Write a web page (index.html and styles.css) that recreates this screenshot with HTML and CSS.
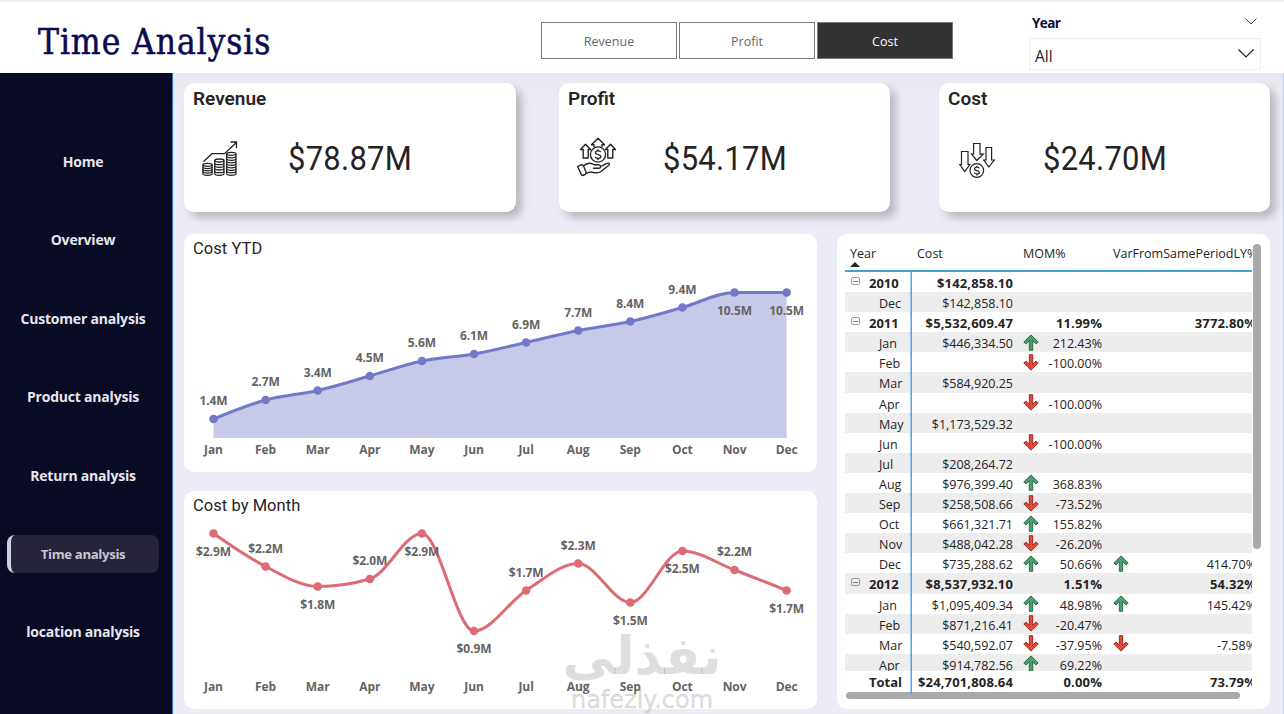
FILE: index.html
```html
<!DOCTYPE html>
<html lang="en">
<head>
    <meta charset="UTF-8">
    <meta name="viewport" content="width=device-width, initial-scale=1.0">
    <title>Time Analysis</title>
    <link rel="stylesheet" href="styles.css">
</head>
<body>
    <!-- Shared icons -->
    <svg class="sprite" width="0" height="0">
        <symbol id="arrow-up" viewBox="0 0 16 17">
            <path d="M8 .9 15.2 8 12.9 9.9 9.7 6.7V16.3H6.3V6.7L3.1 9.9.8 8z" fill="#4f9c6e" stroke="#2f6b4a" stroke-width="1"/>
        </symbol>
        <symbol id="arrow-down" viewBox="0 0 16 17">
            <path d="M8 16.1 15.2 9 12.9 7.1 9.7 10.3V.7H6.3V10.3L3.1 7.1.8 9z" fill="#e04a3c" stroke="#9c2c22" stroke-width="1"/>
        </symbol>
    </svg>

    <header class="header">
        <h1>Time Analysis</h1>
        <div class="tabs">
            <button class="tab">Revenue</button>
            <button class="tab">Profit</button>
            <button class="tab active">Cost</button>
        </div>
        <div class="slicer">
            <div class="slicer-title">
                <span>Year</span>
                <svg width="12" height="7" viewBox="0 0 12 7"><path d="M.5.5 6 6 11.5.5" fill="none" stroke="#444" stroke-width="1"/></svg>
            </div>
            <div class="slicer-box">
                <span>All</span>
                <svg width="16" height="9" viewBox="0 0 16 9"><path d="M.5.5 8 8 15.5.5" fill="none" stroke="#222" stroke-width="1.2"/></svg>
            </div>
        </div>
    </header>

    <div class="page">
        <nav class="sidebar">
            <a class="nav-item">Home</a>
            <a class="nav-item">Overview</a>
            <a class="nav-item">Customer analysis</a>
            <a class="nav-item">Product analysis</a>
            <a class="nav-item">Return analysis</a>
            <a class="nav-item active">Time analysis</a>
            <a class="nav-item">location analysis</a>
        </nav>

        <main class="main">
            <section class="kpis">
                <div class="kpi">
                    <h2>Revenue</h2>
                    <div class="kpi-body">
                        <svg class="kpi-icon" viewBox="0 -1 40 40" fill="none" stroke="#222" stroke-width="1.3">
                            <path d="M3.5 22.5 12 14.7H24.5L36.500 3.500M30.500 3H36.500V9"/>
                            <g id="stacks"></g>
                        </svg>
                        <span class="kpi-value">$78.87M</span>
                    </div>
                </div>
                <div class="kpi">
                    <h2>Profit</h2>
                    <div class="kpi-body">
                        <svg class="kpi-icon" viewBox="-2.500 .5 40 40" fill="none" stroke="#222" stroke-width="1.400" stroke-linejoin="round">
                            <path d="M16.500 9.500V7.300H14L20.500.8 27 7.300H24.500V9.500M5.700 20.500V12H3L8 6.800 13 12H10.700V20.500zM30.300 20.500V12H28L33 6.800 38 12H35.300V20.500z"/>
                            <circle cx="20.500" cy="17" r="7.600"/>
                            <path d="M23.300 14.600C22.800 13 18 12.700 18 15.200 18 17.700 23.300 16.500 23.300 19.100 23.300 21.700 18.200 21.300 17.700 19.400M20.500 11.700V13.300M20.500 20.900V22.500"/>
                            <path d="M6 28.500C10 24.500 14 25.500 17 27.300H21.500C24 28 23.500 30.500 21.500 30.700H15.500M24 28.700 29.500 25.800C32 25 32.500 27 31 28L23.500 34C21 36 19 35.500 16 35 13 34.300 11 34.500 9 36M.2 29.200 3.300 27.500C5 26.800 6 28 6.500 29.500L8.500 34.500C9 36 8.500 36.500 7.500 37L5 38C4.300 38 4 37.500 3.800 37z"/>
                        </svg>
                        <span class="kpi-value">$54.17M</span>
                    </div>
                </div>
                <div class="kpi">
                    <h2>Cost</h2>
                    <div class="kpi-body">
                        <svg class="kpi-icon" viewBox="-1.800 -.5 40 40" fill="none" stroke="#222" stroke-width="1.200">
                            <path d="M16.800 5H23.200V15.700H26.500L20 22 14.800 15.700H16.800zM4.700 13H11.200V26H13L8 33 3 26H4.700zM29.200 9H34.800V21.500H37.500L32 28.500 27 21.500H29.200z"/>
                            <circle cx="20" cy="32" r="6.800" fill="#fff"/>
                            <path d="M22.500 29.900C22 28.300 17.700 28.100 17.700 30.400 17.700 32.700 22.600 31.500 22.600 33.900 22.600 36 18 35.900 17.500 34.100M20 27.200V28.700M20 35.500V37"/>
                        </svg>
                        <span class="kpi-value">$24.70M</span>
                    </div>
                </div>
            </section>

            <section class="visuals">
                <div class="charts">
                    <div class="panel">
                        <h3>Cost YTD</h3>
                        <svg id="ytdChart" class="chart ytd" width="633" height="208" viewBox="0 30 633 208"></svg>
                    </div>
                    <div class="panel">
                        <h3>Cost by Month</h3>
                        <svg id="monthChart" class="chart month" width="633" height="188" viewBox="0 30 633 188"></svg>
                        <div class="watermark">
                            <span class="mark-ar" lang="ar">نفذلي</span>
                            <span class="mark-en">nafezly.com</span>
                        </div>
                    </div>
                </div>

                <div class="panel matrix">
                    <div class="matrix-view">
                        <div class="row head">
                            <div class="cell year">Year<i class="sort"></i></div>
                            <div class="cell">Cost</div>
                            <div class="cell">MOM%</div>
                            <div class="cell">VarFromSamePeriodLY%</div>
                        </div>
                        <div class="matrix-body" id="matrixBody"></div>
                        <div class="row total">
                            <div class="cell year">Total</div>
                            <div class="cell num">$24,701,808.64</div>
                            <div class="cell num">0.00%</div>
                            <div class="cell num">73.79%</div>
                        </div>
                        <div class="scroll-x"></div>
                    </div>
                    <div class="scroll-y"></div>
                </div>
            </section>
        </main>
    </div>

    <script src="script.js"></script>
</body>
</html>
```
FILE: styles.css
```css
* {
    box-sizing: border-box;
}
body {
    margin: 0;
    width: 1284px;
    height: 714px;
    overflow: hidden;
    font-family: 'Open Sans', 'Noto Sans', sans-serif;
    background-color: #fff;
    color: #252423;
}
h1, h2, h3 {
    margin: 0;
}
.sprite {
    display: block;
    position: absolute;
}

/* Header */
.header {
    display: flex;
    align-items: flex-start;
    height: 73px;
    border-top: 2px solid #f0f0f0;
}
.header h1 {
    width: 541px;
    padding: 18px 0 0 38px;
    font-family: 'DejaVu Serif Condensed', 'DejaVu Serif', serif;
    font-stretch: condensed;
    font-size: 35px;
    font-weight: normal;
    letter-spacing: 0.9px;
    line-height: 44px;
    color: #0b0b4f;
    -webkit-text-stroke: 0.5px #0b0b4f;
}
.tabs {
    display: flex;
    gap: 2px;
    padding-top: 20px;
}
.tab {
    width: 136px;
    height: 37px;
    padding: 2px 0 0;
    border: 1px solid #7a7a7a;
    background: #fff;
    font-family: inherit;
    font-size: 12.5px;
    color: #666;
}
.tab.active {
    background: #323232;
    color: #fff;
}
.slicer {
    width: 232px;
    margin-left: 76px;
    padding-top: 12px;
}
.slicer-title,
.slicer-box {
    display: flex;
    justify-content: space-between;
    align-items: center;
}
.slicer-title {
    height: 18px;
    padding: 0 4px 0 3px;
    font-size: 13.5px;
    font-weight: bold;
    color: #0b0b33;
}
.slicer-title span {
    letter-spacing: -0.6px;
}
.slicer-title svg {
    margin-top: -4px;
}
.slicer-box {
    height: 32px;
    margin-top: 6px;
    padding: 3px 6px 0 5px;
    border: 1px solid #eee;
    font-size: 15.5px;
}
.slicer-box svg {
    margin-top: -4px;
}

/* Page */
.page {
    display: flex;
    height: 641px;
}
.sidebar {
    display: flex;
    flex-direction: column;
    gap: 40.4px;
    width: 173px;
    padding: 70px 0 0 7px;
    background: #090a24;
    border-right: 1px solid #2f6fb5;
}
.nav-item {
    width: 152px;
    height: 38px;
    line-height: 38px;
    border-radius: 8px;
    text-align: center;
    font-size: 14px;
    font-weight: bold;
    letter-spacing: -0.2px;
    color: #e6e6ee;
}
.nav-item.active {
    background: #25243b;
    border-left: 4px solid #d0ced8;
    padding-right: 4px;
    font-size: 13.2px;
    letter-spacing: -0.35px;
    color: #c9c6d2;
}
.main {
    flex: 1;
    padding: 10px 13px 0 11px;
    background: linear-gradient(#e8e9ef, #ebecf5 30px, #ececf6);
    border-right: 1px solid #bccdf0;
}

/* KPI cards */
.kpis {
    display: grid;
    grid-template-columns: 332px 331px 331px;
    column-gap: 43px;
    height: 129px;
}
.kpi {
    padding: 5px 9px;
    background: #fff;
    border-radius: 10px;
    box-shadow: 6px 6px 9px rgba(0, 0, 0, 0.22);
}
.kpi:last-child {
    margin: 0 -6px 0 6px;
}
.kpi h2 {
    font-family: Roboto, sans-serif;
    font-size: 19px;
    font-weight: 600;
    line-height: 22px;
}
.kpi-body {
    display: flex;
    align-items: center;
    padding: 28px 0 0 7px;
}
.kpi-icon {
    width: 40px;
    height: 40px;
    overflow: visible;
}
.kpi-value {
    margin-left: 48px;
    font-family: Roboto, sans-serif;
    font-size: 34px;
    letter-spacing: 0.3px;
    line-height: 40px;
    transform: scaleX(0.91);
    transform-origin: 0 50%;
}

/* Visuals */
.visuals {
    display: grid;
    grid-template-columns: 633px 433px;
    column-gap: 20px;
    margin-top: 22px;
}
.charts {
    display: flex;
    flex-direction: column;
    gap: 19px;
}
.panel {
    position: relative;
    background: #fff;
    border-radius: 10px;
}
.panel h3 {
    height: 30px;
    padding: 0 9px;
    font-family: Roboto, sans-serif;
    font-size: 16.5px;
    font-weight: normal;
    letter-spacing: 0.05px;
    line-height: 30px;
}
.chart {
    display: block;
}
.chart text {
    font-size: 12px;
    font-weight: 700;
    letter-spacing: -0.1px;
    fill: #666462;
    text-anchor: middle;
}
.line {
    fill: none;
    stroke-width: 3;
}
.ytd .line {
    stroke: #7379c6;
}
.ytd .area {
    fill: #c7c9e8;
}
.ytd circle {
    fill: #7379c6;
}
.month .line {
    stroke: #de6a73;
}
.month circle {
    fill: #de6a73;
}
.watermark {
    position: absolute;
    left: 378px;
    top: 138px;
    width: 160px;
    color: rgba(90, 90, 90, 0.2);
    text-align: center;
}
.mark-ar,
.mark-en {
    display: block;
    white-space: nowrap;
}
.mark-ar {
    height: 58px;
    font-family: 'DejaVu Sans', sans-serif;
    font-size: 52px;
    font-weight: bold;
    line-height: 54px;
}
.mark-en {
    font-family: 'DejaVu Sans', sans-serif;
    font-size: 24px;
    line-height: 26px;
    -webkit-text-stroke: 0.5px rgba(90, 90, 90, 0.2);
}

/* Matrix */
.matrix {
    display: flex;
    padding: 3px 9px 0 8px;
}
.matrix-view {
    width: 407px;
    overflow: hidden;
}
.row {
    display: grid;
    grid-template-columns: 67px 106px 89px 154px;
    height: 20.1px;
    font-size: 12.5px;
    line-height: 23px;
}
.row:nth-child(even) {
    background: #ededed;
}
.matrix-body {
    height: 399px;
    overflow: hidden;
}
.cell {
    position: relative;
    padding: 0 5px;
    white-space: nowrap;
}
.cell.year {
    padding-left: 34px;
    box-shadow: inset -1.5px 0 #4fa3f0;
}
.cell.num {
    text-align: right;
}
.row.head {
    height: 35px;
    line-height: 33px;
    background: #fff;
    border-bottom: 2px solid #45a0d8;
}
.row.head .cell:last-child {
    padding-left: 6px;
}
.row.head .year {
    padding-left: 5px;
    box-shadow: none;
}
.sort {
    position: absolute;
    left: 5px;
    bottom: 3px;
    border: 5px solid transparent;
    border-top: none;
    border-bottom-color: #252423;
}
.row.group,
.row.total {
    font-size: 13px;
    font-weight: bold;
}
.row.group .num,
.row.total .num {
    letter-spacing: 0.15px;
}
.row.group .year,
.row.total .year {
    padding-left: 24px;
}
.row.total {
    height: 21px;
    background: #fff;
}
.toggle {
    position: absolute;
    left: 6px;
    top: 5px;
    width: 9px;
    height: 8px;
    border: 1px solid #999;
    border-radius: 2px;
}
.toggle::after {
    content: '';
    display: block;
    height: 1px;
    margin: 2.5px 1px 0;
    background: #777;
}
.arrow {
    position: absolute;
    left: 5px;
    top: 1.5px;
    width: 16px;
    height: 17px;
}
.arrow.ly {
    left: 6px;
}
.scroll-x {
    width: 394px;
    height: 7px;
    margin: 0 0 0 1px;
    border-radius: 4px;
    background: #a9a9a9;
}
.scroll-y {
    width: 8px;
    height: 305px;
    margin: 7px 0 0 1px;
    border-radius: 4px;
    background: #a9a9a9;
}
```
FILE: script.js
```js
const months = ['Jan', 'Feb', 'Mar', 'Apr', 'May', 'Jun', 'Jul', 'Aug', 'Sep', 'Oct', 'Nov', 'Dec'];

// label, y of the point, side of the label (-1 above, 1 below)
const ytd = [
    ['1.4M', 185, -1], ['2.7M', 166, -1], ['3.4M', 156.5, -1], ['4.5M', 142, -1],
    ['5.6M', 127, -1], ['6.1M', 120, -1], ['6.9M', 108.5, -1], ['7.7M', 96.5, -1],
    ['8.4M', 87.5, -1], ['9.4M', 73.5, -1], ['10.5M', 58.5, 1], ['10.5M', 58.5, 1]
];
const monthly = [
    ['$2.9M', 42.5, 1], ['$2.2M', 75.5, -1], ['$1.8M', 95.5, 1], ['$2.0M', 88, -1],
    ['$2.9M', 42.5, 1], ['$0.9M', 140, 1], ['$1.7M', 99.5, -1], ['$2.3M', 72.5, -1],
    ['$1.5M', 111.5, 1], ['$2.5M', 60, 1], ['$2.2M', 79, -1], ['$1.7M', 99.5, 1]
];

// Monotone cubic path
function linePath(pts) {
    const n = pts.length;
    const d = [], m = [];
    const h = pts[1][0] - pts[0][0];
    for (let i = 0; i < n - 1; i++) {
        d.push((pts[i + 1][1] - pts[i][1]) / h);
    }
    for (let i = 1; i < n - 1; i++) {
        const avg = (d[i - 1] + d[i]) / 2;
        m[i] = (Math.sign(d[i - 1]) + Math.sign(d[i])) *
            Math.min(Math.abs(d[i - 1]), Math.abs(d[i]), 0.5 * Math.abs(avg));
    }
    m[0] = (3 * d[0] - m[1]) / 2;
    m[n - 1] = (3 * d[n - 2] - m[n - 2]) / 2;
    let path = `M${pts[0]}`;
    for (let i = 0; i < n - 1; i++) {
        const [x0, y0] = pts[i], [x1, y1] = pts[i + 1];
        path += `C${x0 + h / 3},${y0 + m[i] * h / 3},${x1 - h / 3},${y1 - m[i + 1] * h / 3},${x1},${y1}`;
    }
    return path;
}

function drawChart(id, data, axisY, base) {
    const pts = data.map((p, i) => [29.5 + i * 52.1, p[1]]);
    const line = linePath(pts);
    let html = '';
    if (base) {
        html += `<path class="area" d="${line}V${base}H${pts[0][0]}Z"/>`;
    }
    html += `<path class="line" d="${line}"/>`;
    pts.forEach(([x, y], i) => {
        html += `<circle cx="${x}" cy="${y}" r="4.3"/>`;
        html += `<text x="${x}" y="${y + 4.3 + data[i][2] * 18}">${data[i][0]}</text>`;
        html += `<text x="${x}" y="${axisY}">${months[i]}</text>`;
    });
    document.getElementById(id).innerHTML = html;
}

drawChart('ytdChart', ytd, 220, 204);
drawChart('monthChart', monthly, 200);

// Coin stacks of the revenue icon
let coins = '';
[[7.5, 25.8, 5], [19.3, 21.5, 6], [31.3, 14.8, 9]].forEach(([cx, top, n]) => {
    const step = (34.8 - top) / (n - 1);
    coins += `<ellipse cx="${cx}" cy="${top}" rx="4.6" ry="1.5"/>`;
    for (let i = 1; i < n; i++) {
        coins += `<path d="M${cx - 4.6} ${top + i * step}c0 2 9.2 2 9.2 0"/>`;
    }
    coins += `<path d="M${cx - 4.6} ${top}V34.8M${cx + 4.6} ${top}V34.8"/>`;
});
document.getElementById('stacks').innerHTML = coins;

// name, cost, MOM arrow + value, LY arrow + value
const rows = [
    ['2010', '$142,858.10', '', '', '', ''],
    ['Dec', '$142,858.10', '', '', '', ''],
    ['2011', '$5,532,609.47', '', '11.99%', '', '3772.80%'],
    ['Jan', '$446,334.50', 'up', '212.43%', '', ''],
    ['Feb', '', 'down', '-100.00%', '', ''],
    ['Mar', '$584,920.25', '', '', '', ''],
    ['Apr', '', 'down', '-100.00%', '', ''],
    ['May', '$1,173,529.32', '', '', '', ''],
    ['Jun', '', 'down', '-100.00%', '', ''],
    ['Jul', '$208,264.72', '', '', '', ''],
    ['Aug', '$976,399.40', 'up', '368.83%', '', ''],
    ['Sep', '$258,508.66', 'down', '-73.52%', '', ''],
    ['Oct', '$661,321.71', 'up', '155.82%', '', ''],
    ['Nov', '$488,042.28', 'down', '-26.20%', '', ''],
    ['Dec', '$735,288.62', 'up', '50.66%', 'up', '414.70%'],
    ['2012', '$8,537,932.10', '', '1.51%', '', '54.32%'],
    ['Jan', '$1,095,409.34', 'up', '48.98%', 'up', '145.42%'],
    ['Feb', '$871,216.41', 'down', '-20.47%', '', ''],
    ['Mar', '$540,592.07', 'down', '-37.95%', 'down', '-7.58%'],
    ['Apr', '$914,782.56', 'up', '69.22%', '', '']
];

const arrow = (dir, cls = '') => dir ? `<svg class="arrow ${cls}"><use href="#arrow-${dir}"/></svg>` : '';

document.getElementById('matrixBody').innerHTML = rows.map(r => {
    const group = r[0].startsWith('20');
    return `<div class="row${group ? ' group' : ''}">
        <div class="cell year">${group ? '<i class="toggle"></i>' : ''}${r[0]}</div>
        <div class="cell num">${r[1]}</div>
        <div class="cell num">${arrow(r[2])}${r[3]}</div>
        <div class="cell num">${arrow(r[4], 'ly')}${r[5]}</div>
    </div>`;
}).join('');
```
